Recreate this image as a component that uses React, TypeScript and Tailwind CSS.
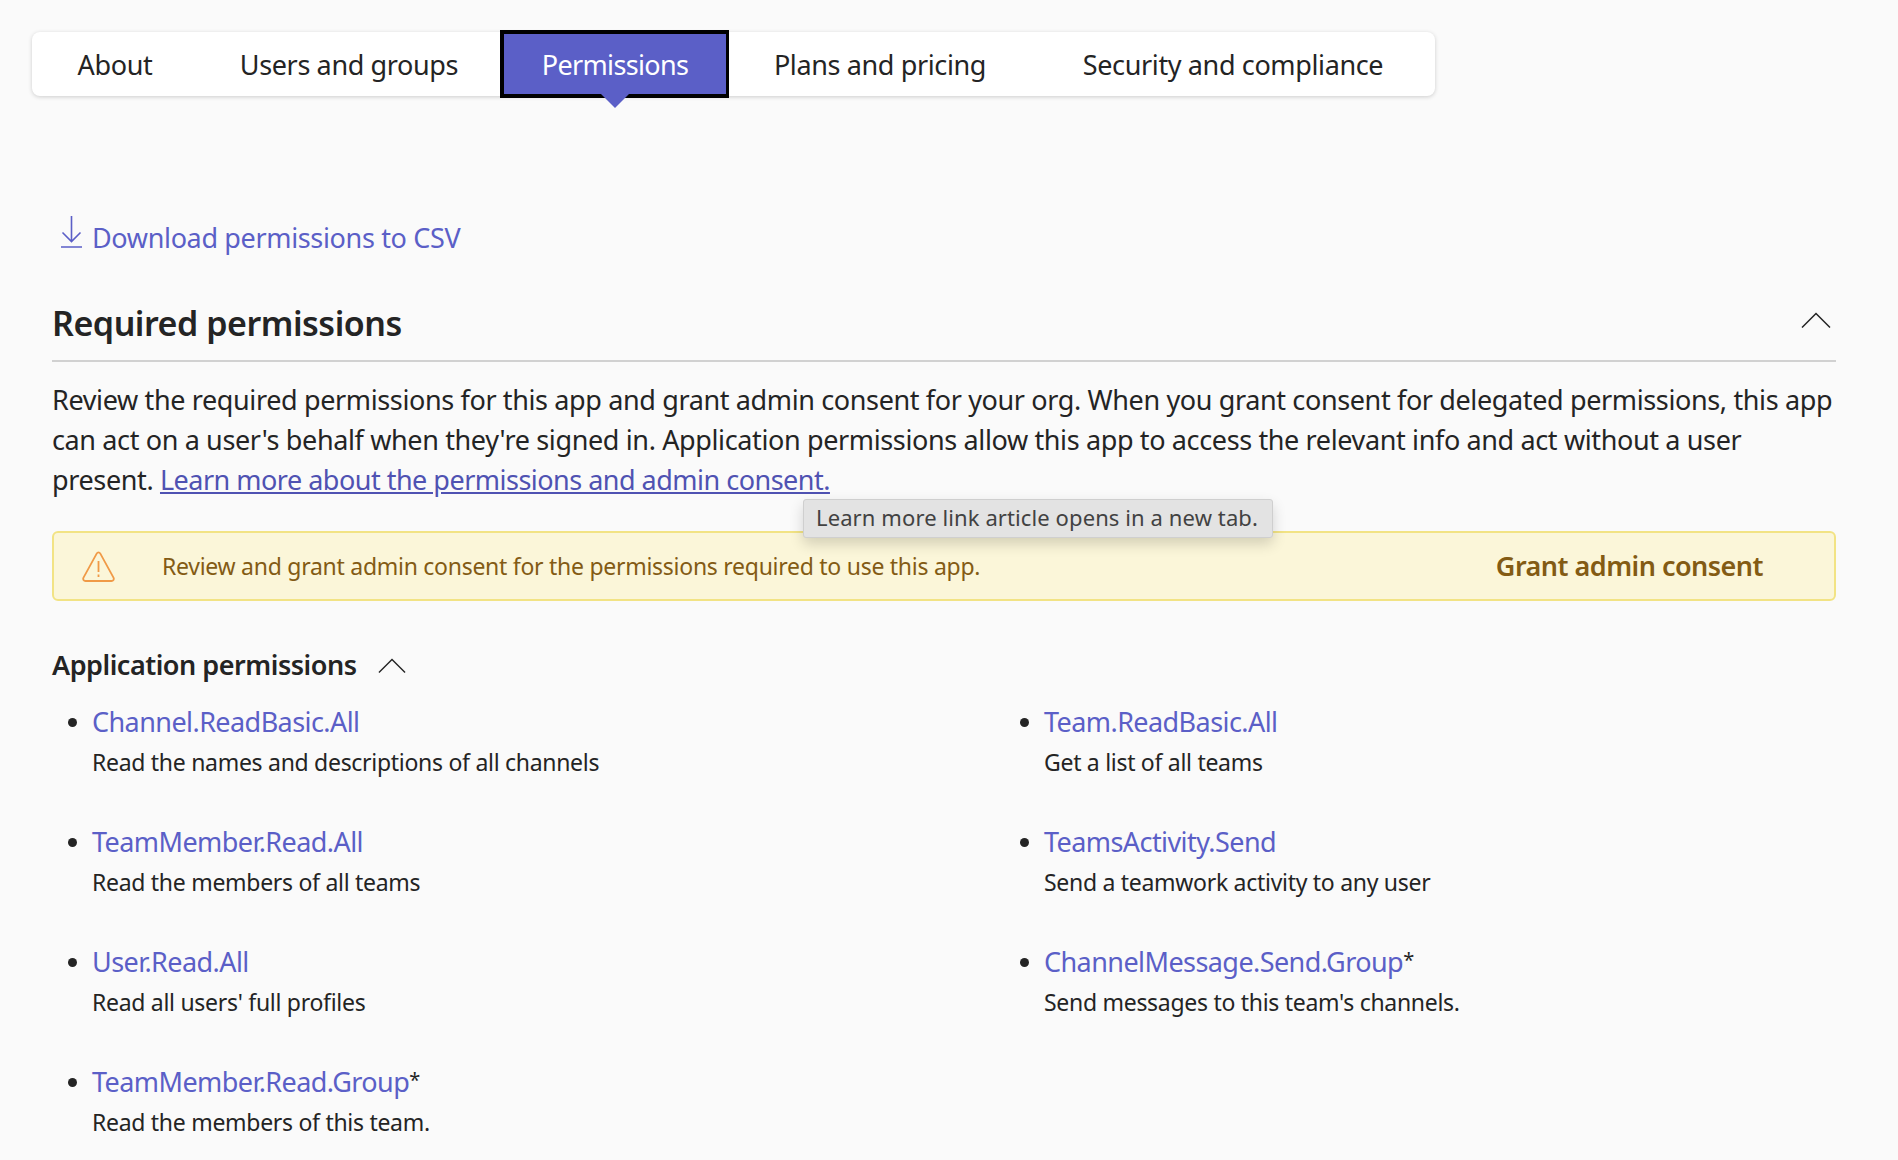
const font = "font-['Noto_Sans','Open_Sans',sans-serif]";

const tabs = [
  { label: 'About', width: 'w-[166px]' },
  { label: 'Users and groups', width: 'w-[302px]' },
  { label: 'Permissions', width: 'w-[229px]', active: true },
  { label: 'Plans and pricing', width: 'w-[302px]' },
  { label: 'Security and compliance', width: 'w-[404px]' },
];

const leftPermissions = [
  { name: 'Channel.ReadBasic.All', text: 'Read the names and descriptions of all channels' },
  { name: 'TeamMember.Read.All', text: 'Read the members of all teams' },
  { name: 'User.Read.All', text: "Read all users' full profiles" },
  { name: 'TeamMember.Read.Group', star: true, text: 'Read the members of this team.' },
];

const rightPermissions = [
  { name: 'Team.ReadBasic.All', text: 'Get a list of all teams' },
  { name: 'TeamsActivity.Send', text: 'Send a teamwork activity to any user' },
  { name: 'ChannelMessage.Send.Group', star: true, text: "Send messages to this team's channels." },
];

const ChevronUp = ({ className }: { className: string }) => (
  <svg className={className} viewBox="0 0 30 16" fill="none" stroke="#242424" strokeWidth="1.5">
    <path d="M1 15.5 15 1.5 29 15.5" />
  </svg>
);

const PermissionItem = ({ item }: { item: { name: string; text: string; star?: boolean } }) => (
  <li>
    <div className="flex items-center h-10 text-[27px] tracking-[-0.57px] text-[#5b5fc7]">
      <span className="w-[9px] h-[9px] rounded-full bg-[#242424] ml-4 mr-[15px]"></span>
      <span>{item.name}</span>
      {item.star && <span className="-mt-[4px] text-[20px] text-[#242424]">*</span>}
    </div>
    <p className="pl-10 h-10 leading-10 text-[23px] tracking-[-0.29px] text-[#242424]">{item.text}</p>
  </li>
);

const App = () => {
  return (
    <div className={`relative h-[1160px] overflow-hidden bg-[#fafafa] pt-8 ${font}`}>
      <div className="ml-8 flex h-16 w-[1403px] rounded-lg bg-white shadow-[0_1px_4px_rgba(0,0,0,0.18)]">
        {tabs.map(tab =>
          tab.active ? (
            <div
              key={tab.label}
              className={`relative -my-[2px] flex h-[68px] items-center justify-center border-4 border-r-[3px] border-black bg-[#5b5fc7] pt-[2px] text-[27px] tracking-[-0.65px] text-white ${tab.width}`}
            >
              {tab.label}
              <span className="absolute left-1/2 top-[60px] h-0 w-0 -translate-x-1/2 border-x-[14px] border-t-[14px] border-x-transparent border-t-[#5b5fc7]"></span>
            </div>
          ) : (
            <div
              key={tab.label}
              className={`flex items-center justify-center pt-[2px] text-[27px] tracking-[-0.37px] text-[#242424] ${tab.width}`}
            >
              {tab.label}
            </div>
          )
        )}
      </div>

      <div className="pl-[52px] pr-[62px]">
        <div className="mt-[122px] flex h-10 items-start text-[27px] tracking-[-0.35px] text-[#5b5fc7]">
          <svg className="-mt-[2px] ml-[9px] mr-[10px] h-[32px] w-[21px]" viewBox="0 0 21 32" fill="none" stroke="#5b5fc7" strokeWidth="1.6">
            <path d="M10.5 0v25M1.5 16.5l9 9 9-9M0 31h21" />
          </svg>
          <span className="leading-10">Download permissions to CSV</span>
        </div>

        <div className="mt-[42px] flex h-[62px] items-start justify-between border-b-2 border-[#d1d1d1] pt-[3px]">
          <h2 className="text-[34px] leading-10 font-semibold tracking-[-0.47px] text-[#242424]">Required permissions</h2>
          <ChevronUp className="mt-[9px] mr-[5px] h-4 w-[30px]" />
        </div>

        <p className="mt-[18px] text-[27px] leading-10 tracking-[-0.37px] text-[#242424]">
          Review the required permissions for this app and grant admin consent for your org. When you grant consent for delegated permissions, this app can act on a user's behalf when they're signed in. Application permissions allow this app to access the relevant info and act without a user present.{' '}
          <span className="tracking-[-0.51px] text-[#4f52b2] underline">Learn more about the permissions and admin consent.</span>
        </p>

        <div className="mt-[31px] flex h-[70px] items-center rounded-md border-2 border-[#f2e384] bg-[#fbf6d9] text-[#835b14]">
          <svg className="ml-[28px] mr-[47px] h-[31px] w-[33px]" viewBox="0 0 33 31" fill="none" stroke="#f09a47" strokeWidth="1.8">
            <path d="M14.8 2.4 1.5 26.6c-.9 1.7.3 3.4 2 3.4h26c1.7 0 2.9-1.7 2-3.4L18.2 2.4c-.8-1.5-2.6-1.5-3.4 0Z" />
            <path d="M16.5 10v11M16.5 23.5v2.5" />
          </svg>
          <span className="text-[23px] tracking-[-0.27px]">Review and grant admin consent for the permissions required to use this app.</span>
          <span className="ml-auto mr-[71px] text-[27px] font-semibold tracking-[-0.52px]">Grant admin consent</span>
        </div>

        <div className="mt-[44px] flex h-10 items-center text-[27px] font-semibold tracking-[-0.48px] text-[#242424]">
          Application permissions
          <ChevronUp className="ml-[22px] h-[15px] w-[28px]" />
        </div>

        <div className="mt-[17px] grid grid-cols-[952px_1fr]">
          <ul className="flex flex-col gap-10">
            {leftPermissions.map(item => (
              <PermissionItem key={item.name} item={item} />
            ))}
          </ul>
          <ul className="flex flex-col gap-10">
            {rightPermissions.map(item => (
              <PermissionItem key={item.name} item={item} />
            ))}
          </ul>
        </div>
      </div>

      {/* tooltip over the banner */}
      <div className="absolute left-[803px] top-[499px] flex h-[39px] w-[470px] items-center justify-center rounded-[3px] border border-[#cfcfcf] bg-[#e3e3e3] pb-[2px] pr-[2px] text-[22px] tracking-[0.1px] text-[#424242] shadow-[0_6px_14px_rgba(0,0,0,0.16)]">
        Learn more link article opens in a new tab.
      </div>
    </div>
  );
};

export default App;
